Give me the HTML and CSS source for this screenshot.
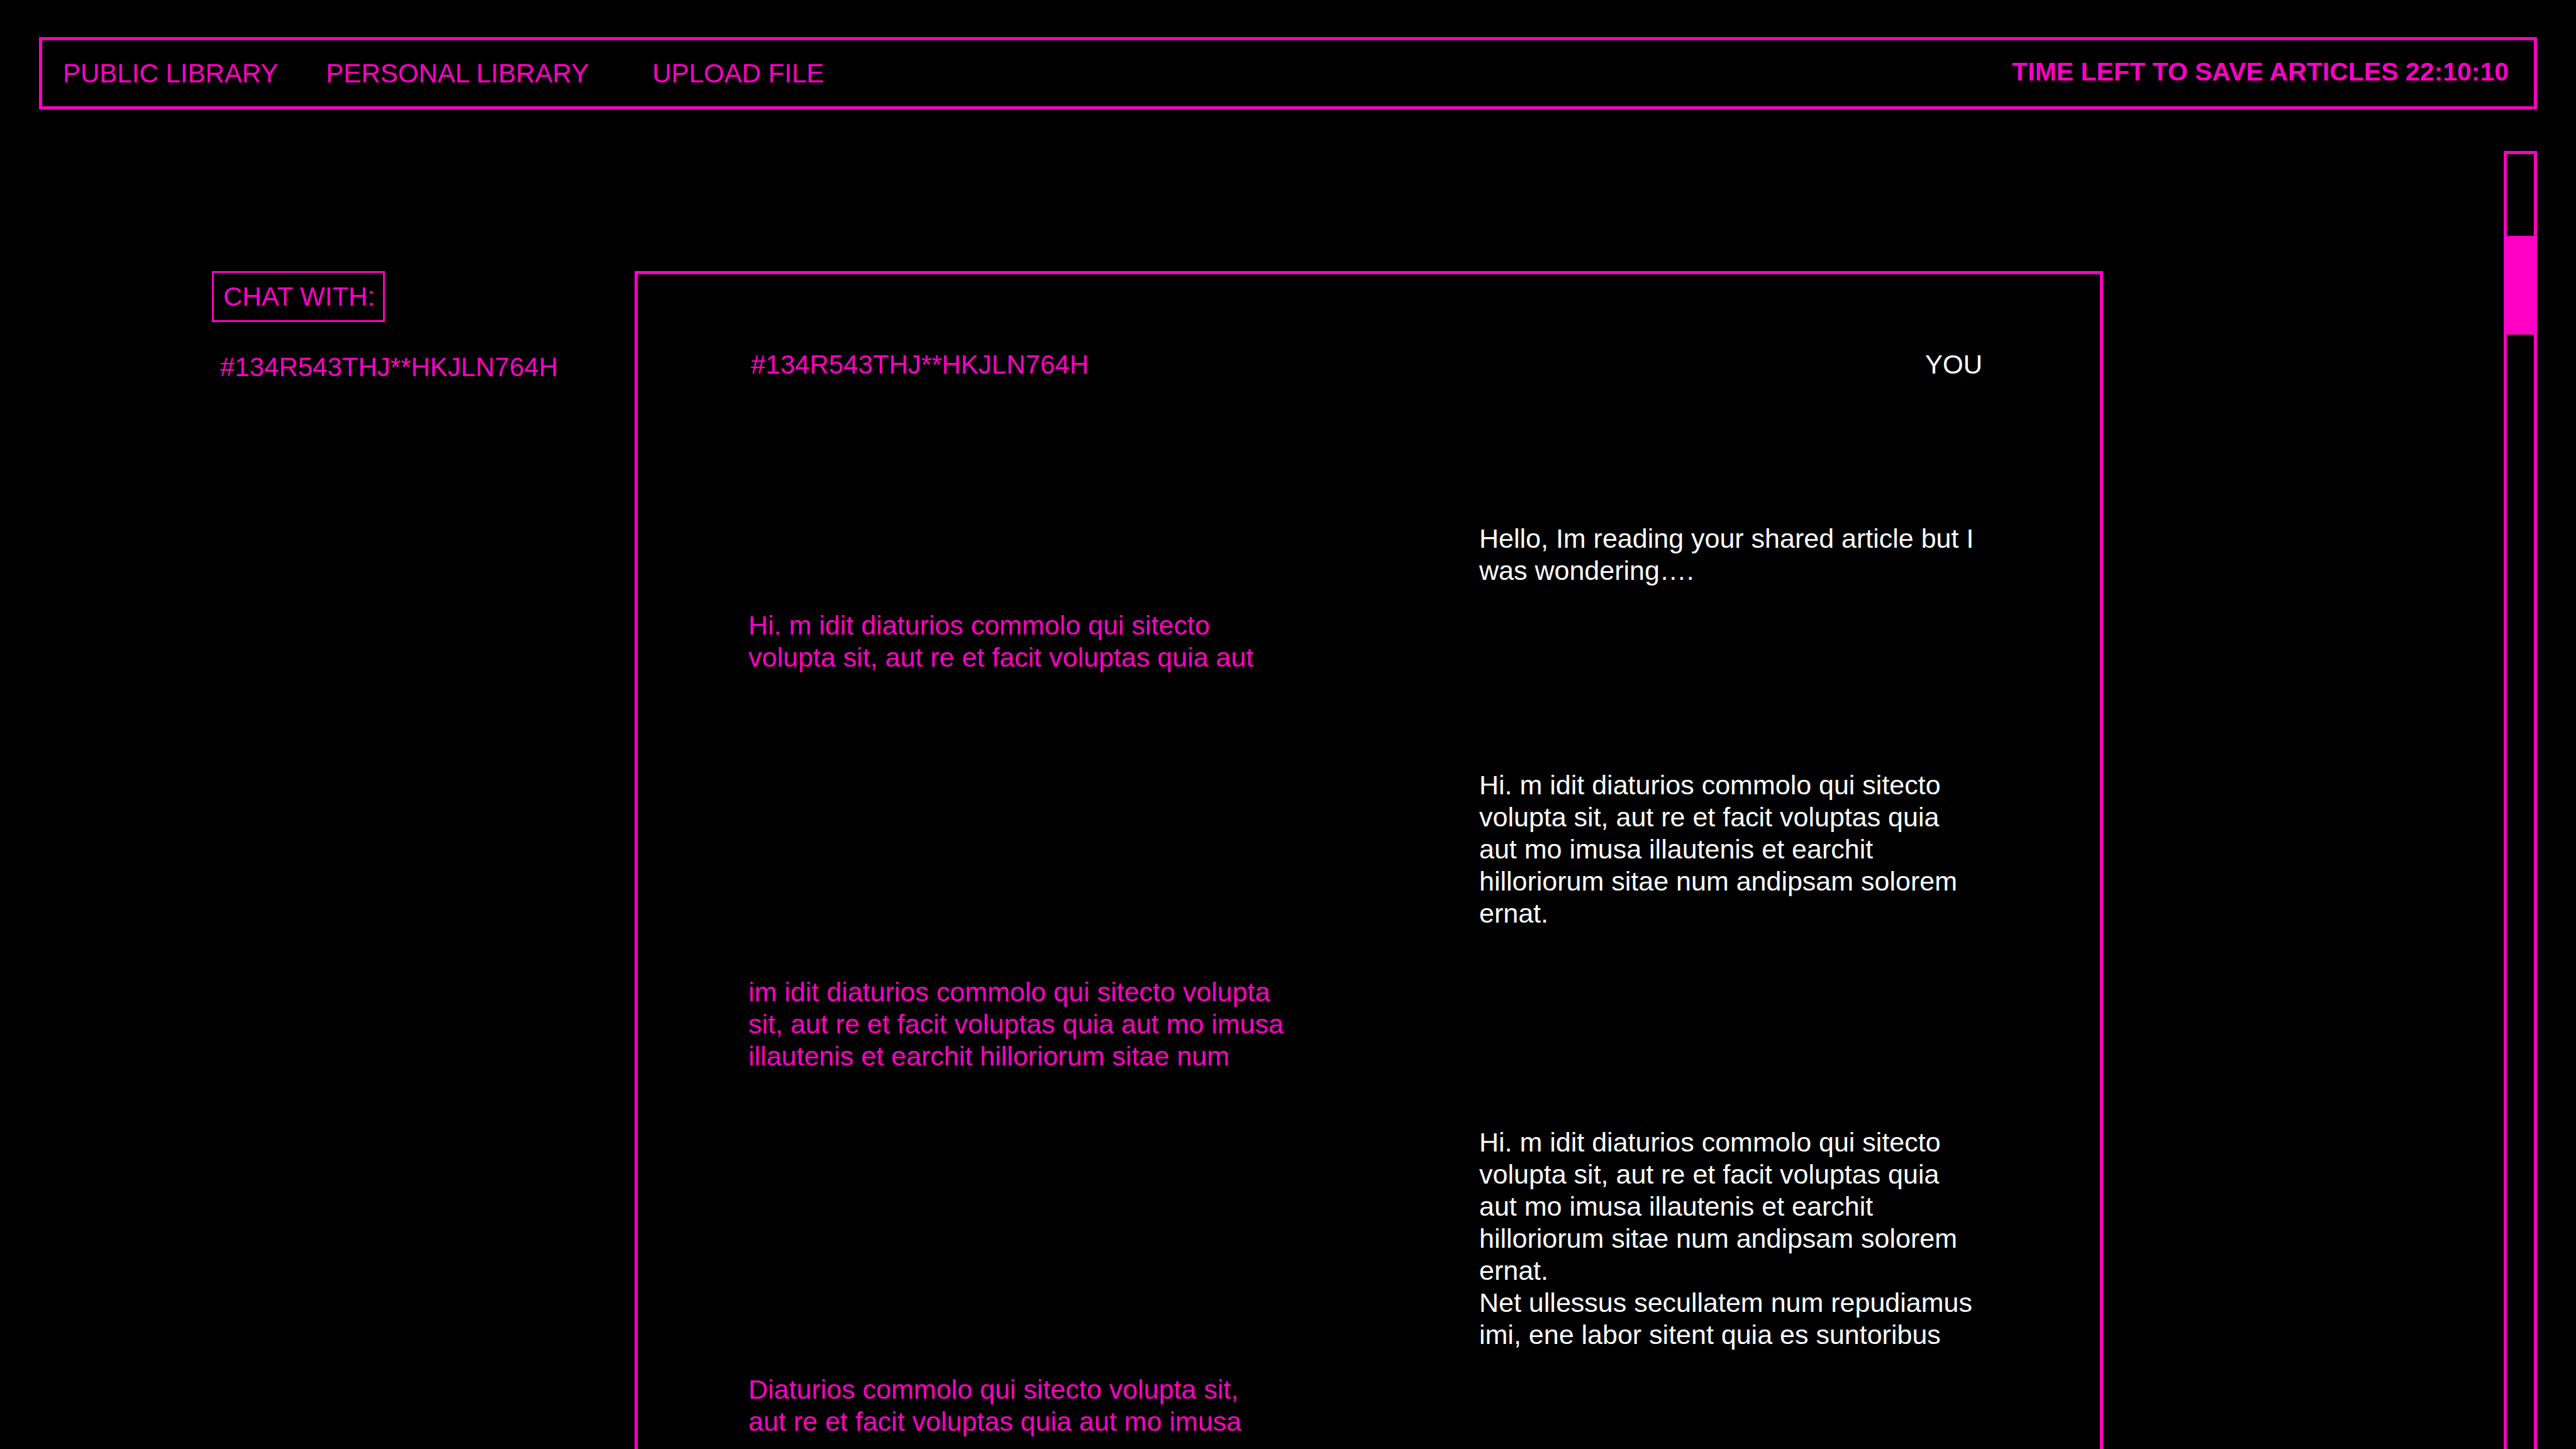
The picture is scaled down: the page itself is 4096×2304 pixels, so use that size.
FILE: index.html
```html
<!DOCTYPE html>
<html lang="en">
<head>
<meta charset="utf-8">
<title>Library chat</title>
<link rel="stylesheet" href="styles.css">
</head>
<body>
<header class="topbar">
  <nav class="nav">
    <a class="nav-link" href="#public">PUBLIC LIBRARY</a>
    <a class="nav-link" href="#personal">PERSONAL LIBRARY</a>
    <a class="nav-link nav-action" href="#upload">UPLOAD FILE</a>
  </nav>
  <p class="timer">TIME LEFT TO SAVE ARTICLES 22:10:10</p>
</header>
<div class="workspace">
  <aside class="contacts">
    <h2 class="contacts-title">CHAT WITH:</h2>
    <a class="contact" href="#chat">#134R543THJ**HKJLN764H</a>
  </aside>
  <main class="chat">
    <div class="chat-names">
      <span>#134R543THJ**HKJLN764H</span>
      <span class="you">YOU</span>
    </div>
    <p class="message mine">Hello, Im reading your shared article but I<br>was wondering….</p>
    <p class="message after-short">Hi. m idit diaturios commolo qui sitecto<br>volupta sit, aut re et facit voluptas quia aut</p>
    <p class="message mine after-break">Hi. m idit diaturios commolo qui sitecto<br>volupta sit, aut re et facit voluptas quia<br>aut mo imusa illautenis et earchit<br>hilloriorum sitae num andipsam solorem<br>ernat.</p>
    <p class="message after-medium">im idit diaturios commolo qui sitecto volupta<br>sit, aut re et facit voluptas quia aut mo imusa<br>illautenis et earchit hilloriorum sitae num</p>
    <p class="message mine after-long">Hi. m idit diaturios commolo qui sitecto<br>volupta sit, aut re et facit voluptas quia<br>aut mo imusa illautenis et earchit<br>hilloriorum sitae num andipsam solorem<br>ernat.<br>Net ullessus secullatem num repudiamus<br>imi, ene labor sitent quia es suntoribus</p>
    <p class="message after-short">Diaturios commolo qui sitecto volupta sit,<br>aut re et facit voluptas quia aut mo imusa</p>
  </main>
  <div class="track">
    <div class="thumb"></div>
  </div>
</div>
</body>
</html>
```
FILE: styles.css
```css
:root {
  --pink: #ff00c4;
}

* {
  box-sizing: border-box;
  margin: 0;
}

body {
  display: flex;
  flex-direction: column;
  min-height: 100vh;
  padding: 59px 62px 0;
  background: #000;
  color: var(--pink);
  font: 42px/51px "Liberation Sans", Arial, sans-serif;
}

a {
  color: inherit;
  text-decoration: none;
}

.topbar {
  display: flex;
  align-items: center;
  justify-content: space-between;
  padding: 25px 40px 25px 33px;
  border: 5px solid var(--pink);
}

.nav {
  display: flex;
  gap: 76px;
}

.nav-action {
  margin-left: 25px;
}

.timer {
  padding-bottom: 4px;
  font-size: 41px;
  font-weight: bold;
}

.workspace {
  display: grid;
  flex: 1;
  grid-template-columns: 672px 1fr 53px;
  padding: 66px 0 0 275px;
}

.contacts {
  display: flex;
  flex-direction: column;
  align-items: flex-start;
  gap: 46px;
  padding-top: 191px;
}

.contacts-title {
  padding: 12px 13px 12px 15px;
  border: 3px solid var(--pink);
  font-size: 42px;
  font-weight: normal;
}

.contact {
  padding-left: 13px;
}

.chat {
  display: flex;
  flex-direction: column;
  margin: 191px 637px 0 0;
  padding: 118px 187px 0 176px;
  border: 5px solid var(--pink);
  border-bottom: 0;
}

.chat-names {
  display: flex;
  justify-content: space-between;
  margin-bottom: 226px;
  padding-left: 4px;
}

.you,
.mine {
  color: #fff;
}

.message {
  font-size: 43px;
}

.mine {
  align-self: flex-end;
  width: 800px;
}

.after-short {
  margin-top: 36px;
}

.after-medium {
  margin-top: 74px;
}

.after-long {
  margin-top: 86px;
}

.after-break {
  margin-top: 152px;
}

.track {
  padding-top: 130px;
  border: 5px solid var(--pink);
  border-bottom: 0;
}

.thumb {
  height: 157px;
  background: var(--pink);
}
```
